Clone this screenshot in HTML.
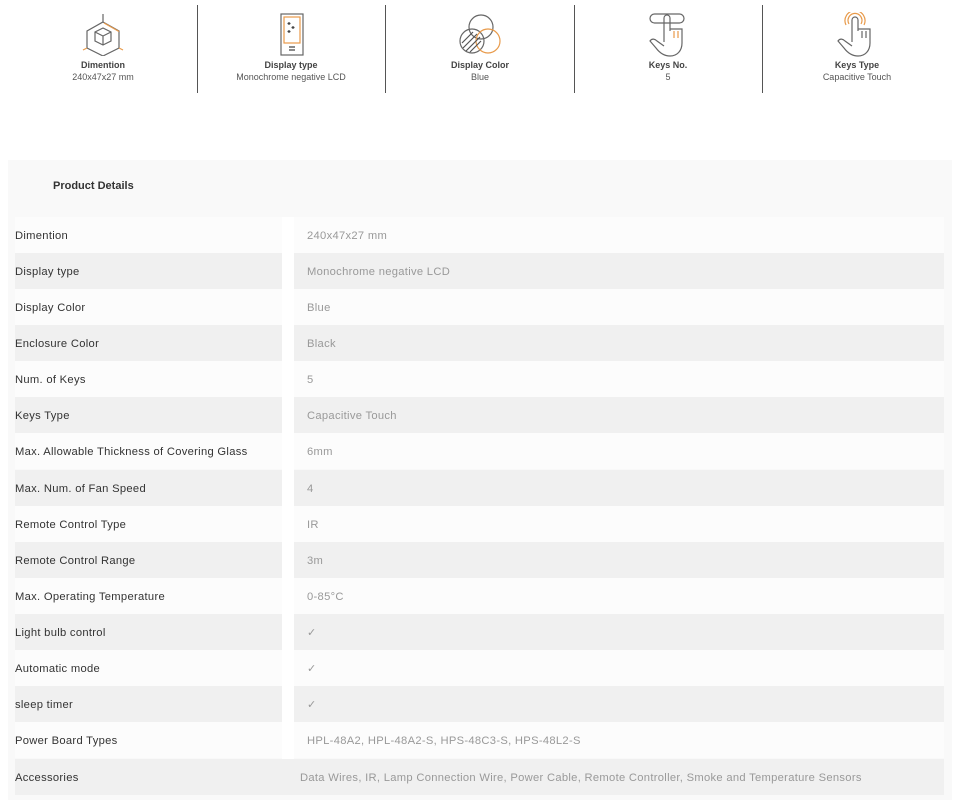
<!DOCTYPE html>
<html><head><meta charset="utf-8"><style>
body{margin:0;background:#fff;font-family:"Liberation Sans",sans-serif;width:960px;height:806px;position:relative;overflow:hidden}
.feat{position:absolute;top:0;width:188px;text-align:center}
.feat svg{position:absolute;left:50%;transform:translateX(-50%);top:12px}
.feat .t{position:absolute;top:60px;width:100%;font-size:9px;font-weight:bold;color:#444}
.feat .v{position:absolute;top:72px;width:100%;font-size:9px;color:#555}
.div{position:absolute;top:5px;height:88px;width:1px;background:#555}
.panel{position:absolute;left:8px;top:160px;width:944px;height:640px;background:#f9f9f9}
.pd{position:absolute;left:53px;top:180px;font-size:11px;font-weight:bold;color:#333}
.row{position:absolute;left:15px;width:929px;height:36px;font-size:11.2px;letter-spacing:0.3px}
.row .l{position:absolute;left:0;top:0;width:267px;height:36px;line-height:38px;color:#333}
.row .r{position:absolute;left:279px;top:0;width:650px;height:36px;line-height:38px;color:#999}
.row .r span{padding-left:13px}
.o .l,.o .r{background:#fcfcfc}
.e .l,.e .r{background:#f0f0f0}
.gap{position:absolute;left:282px;top:217px;width:12px;height:542px;background:#fff}
</style></head><body>
<div class="feat" style="left:9px">
<svg width="50" height="44" viewBox="0 0 50 44" fill="none" stroke-width="1.2"><path d="M25 2v8M25 10l16 9v17l-16 8-16-8V19z" stroke="#666"/><path d="M9 36l-4 2M41 36l4 2" stroke="#e89a4a"/><path d="M25 16l8 4v9l-8 4-8-4v-9zM17 20l8 4 8-4M25 24v9" stroke="#666"/><path d="M26 11l15 8.5" stroke="#e89a4a"/></svg>
<div class="t">Dimention</div><div class="v">240x47x27 mm</div></div>
<div class="div" style="left:197px"></div>
<div class="feat" style="left:197px">
<svg width="30" height="44" viewBox="0 0 30 44" fill="none" stroke-width="1.2"><rect x="5" y="2" width="22" height="41" stroke="#666"/><rect x="8" y="5" width="16" height="26" stroke="#e89a4a"/><path d="M13 10v3M11.5 11.5h3M17 14v3M15.5 15.5h3M13 18v3M11.5 19.5h3M13 35h6M13 38h6" stroke="#444"/></svg>
<div class="t">Display type</div><div class="v">Monochrome negative LCD</div></div>
<div class="div" style="left:385px"></div>
<div class="feat" style="left:386px">
<svg width="50" height="44" viewBox="0 0 50 44" fill="none" stroke-width="1.2"><circle cx="26" cy="15" r="12" stroke="#666"/><circle cx="17" cy="29" r="12" stroke="#666"/><circle cx="33" cy="29" r="12" stroke="#e89a4a"/><path d="M8 36l14-14M11 39l14-14M15 40l11-11M7 31l11-11" stroke="#555"/></svg>
<div class="t">Display Color</div><div class="v">Blue</div></div>
<div class="div" style="left:574px"></div>
<div class="feat" style="left:574px">
<svg width="40" height="46" viewBox="0 0 40 46" fill="none" stroke-width="1.2"><rect x="2" y="2" width="34" height="9" rx="4.5" stroke="#666"/><path d="M16 6v24M16 6a3 3 0 0 1 6 0v13M22 17h12v14c0 8-5 13-12 13s-11-4-14-8l-6-7c2-3 5-2 7 0l7 5" stroke="#666"/><path d="M26 19v7M30 19v7" stroke="#e89a4a"/></svg>
<div class="t">Keys No.</div><div class="v">5</div></div>
<div class="div" style="left:762px"></div>
<div class="feat" style="left:763px">
<svg width="40" height="46" viewBox="0 0 40 46" fill="none" stroke-width="1.2"><path d="M12 12a7 7 0 1 1 12 0M9 13a10 10 0 1 1 18 0" stroke="#e89a4a"/><path d="M15 8v22M15 8a3 3 0 0 1 6 0v11M21 17h12v14c0 8-5 13-12 13s-11-4-14-8l-6-7c2-3 5-2 7 0l7 5" stroke="#666"/><path d="M25 19v7M29 19v7" stroke="#666"/></svg>
<div class="t">Keys Type</div><div class="v">Capacitive Touch</div></div>

<div class="panel"></div>
<div class="pd">Product Details</div>
<div class="row o" style="top:217px"><div class="l">Dimention</div><div class="r"><span>240x47x27 mm</span></div></div>
<div class="row e" style="top:253px"><div class="l">Display type</div><div class="r"><span>Monochrome negative LCD</span></div></div>
<div class="row o" style="top:289px"><div class="l">Display Color</div><div class="r"><span>Blue</span></div></div>
<div class="row e" style="top:325px"><div class="l">Enclosure Color</div><div class="r"><span>Black</span></div></div>
<div class="row o" style="top:361px"><div class="l">Num. of Keys</div><div class="r"><span>5</span></div></div>
<div class="row e" style="top:397px"><div class="l">Keys Type</div><div class="r"><span>Capacitive Touch</span></div></div>
<div class="row o" style="top:433px"><div class="l">Max. Allowable Thickness of Covering Glass</div><div class="r"><span>6mm</span></div></div>
<div class="row e" style="top:470px"><div class="l">Max. Num. of Fan Speed</div><div class="r"><span>4</span></div></div>
<div class="row o" style="top:506px"><div class="l">Remote Control Type</div><div class="r"><span>IR</span></div></div>
<div class="row e" style="top:542px"><div class="l">Remote Control Range</div><div class="r"><span>3m</span></div></div>
<div class="row o" style="top:578px"><div class="l">Max. Operating Temperature</div><div class="r"><span>0-85°C</span></div></div>
<div class="row e" style="top:614px"><div class="l">Light bulb control</div><div class="r"><span>✓</span></div></div>
<div class="row o" style="top:650px"><div class="l">Automatic mode</div><div class="r"><span>✓</span></div></div>
<div class="row e" style="top:686px"><div class="l">sleep timer</div><div class="r"><span>✓</span></div></div>
<div class="row o" style="top:722px"><div class="l">Power Board Types</div><div class="r"><span>HPL-48A2, HPL-48A2-S, HPS-48C3-S, HPS-48L2-S</span></div></div>
<div class="gap"></div>
<div class="row" style="top:759px;background:#f0f0f0"><div class="l">Accessories</div><div class="r" style="left:285px;background:none"><span style="padding-left:0">Data Wires, IR, Lamp Connection Wire, Power Cable, Remote Controller, Smoke and Temperature Sensors</span></div></div>
</body></html>
